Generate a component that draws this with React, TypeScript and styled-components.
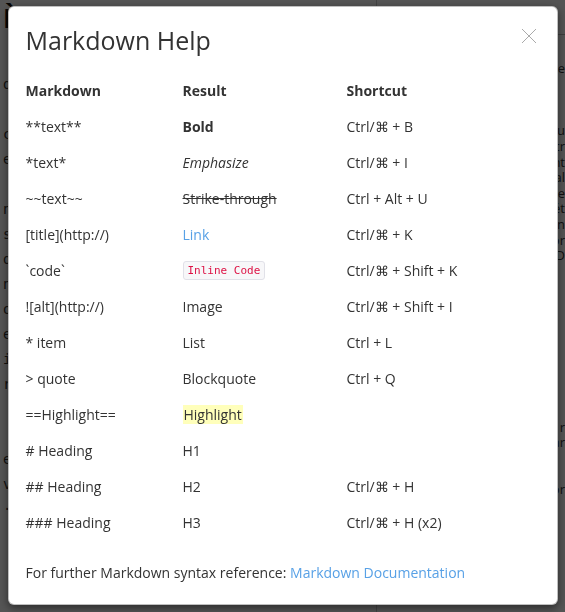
import React from "react";
import styled, { createGlobalStyle } from "styled-components";

const GlobalStyle = createGlobalStyle`
  html, body { margin: 0; padding: 0; overflow: hidden; }
  body { font-family: "Open Sans", "Liberation Sans", sans-serif; background: #fff; }
`;

const Page = styled.div`
  display: grid;
  grid-template-columns: 377px 1fr;
  width: 565px;
  height: 612px;
  overflow: hidden;
  background: #fff;
`;

const SourcePane = styled.div`
  border-right: 1px solid #ccc;
  padding: 0 0 0 3px;
  overflow: hidden;
`;

const PageTitle = styled.h1`
  margin: -2px 0 0;
  font-family: "Open Sans", sans-serif;
  font-size: 26px;
  font-weight: 700;
  color: #111;
  line-height: 40px;
`;

const SourceLines = styled.div`
  margin-top: 34px;
  font-family: "DejaVu Sans Mono", monospace;
  font-size: 14px;
  line-height: 25px;
  color: #333;
  white-space: pre;
`;

const PreviewPane = styled.div`
  padding: 34px 0 0 8px;
  overflow: hidden;
`;

const PreviewRule = styled.div`
  border-top: 1px solid #bbb;
  margin-bottom: 26px;
`;

const PreviewLines = styled.div`
  font-family: "Open Sans", sans-serif;
  font-size: 13px;
  line-height: 15.6px;
  color: #333;
  white-space: pre;
  text-align: right;
`;

const Overlay = styled.div`
  position: fixed;
  inset: 0;
  background: rgba(0, 0, 0, 0.67);
  display: flex;
  justify-content: center;
  align-items: flex-start;
  padding-top: 6px;
`;

const Modal = styled.div`
  position: relative;
  width: 550px;
  box-sizing: border-box;
  background: #fff;
  border: 1px solid rgba(0, 0, 0, 0.25);
  border-radius: 6px;
  box-shadow: 0 3px 9px rgba(0, 0, 0, 0.5);
  padding: 17px 17px 21px;
  color: #333;
`;

const ModalTitle = styled.h2`
  margin: 0;
  font-family: "Open Sans", sans-serif;
  font-size: 25px;
  font-weight: 400;
  line-height: 32px;
  color: #333;
`;

const CloseButton = styled.button`
  position: absolute;
  top: 20px;
  right: 19px;
  width: 18px;
  height: 18px;
  padding: 0;
  border: 0;
  background: none;
  cursor: pointer;
  display: flex;
  align-items: center;
  justify-content: center;
`;

const Table = styled.div`
  display: grid;
  grid-template-columns: 157px 164px 1fr;
  margin-top: 16px;
  font-size: 14px;
`;

const Cell = styled.div<{ $head?: boolean }>`
  height: 36px;
  display: flex;
  align-items: center;
  font-weight: ${(p) => (p.$head ? 700 : 400)};
  color: #333;
  white-space: nowrap;
`;

const Bold = styled.strong`
  font-weight: 700;
`;

const Em = styled.em`
  font-style: italic;
`;

const Strike = styled.span`
  text-decoration: line-through;
`;

const LinkText = styled.a`
  color: #58a1e6;
  text-decoration: none;
`;

const Code = styled.code`
  font-family: "DejaVu Sans Mono", "Liberation Mono", monospace;
  font-size: 11px;
  color: #dd1144;
  background: #f7f7f9;
  border: 1px solid #e1e1e8;
  border-radius: 3px;
  padding: 2px 4px;
  line-height: 13px;
`;

const Mark = styled.mark`
  background: #ffffbb;
  color: #333;
  padding: 0 1px;
`;

const Footer = styled.p`
  margin: 23px 0 0;
  font-size: 14px;
  line-height: 20px;
  color: #333;
`;

const rows: { md: string; result: React.ReactNode; shortcut: string }[] = [
  { md: "**text**", result: <Bold>Bold</Bold>, shortcut: "Ctrl/⌘ + B" },
  { md: "*text*", result: <Em>Emphasize</Em>, shortcut: "Ctrl/⌘ + I" },
  { md: "~~text~~", result: <Strike>Strike-through</Strike>, shortcut: "Ctrl + Alt + U" },
  { md: "[title](http://)", result: <LinkText href="#">Link</LinkText>, shortcut: "Ctrl/⌘ + K" },
  { md: "`code`", result: <Code>Inline Code</Code>, shortcut: "Ctrl/⌘ + Shift + K" },
  { md: "![alt](http://)", result: "Image", shortcut: "Ctrl/⌘ + Shift + I" },
  { md: "* item", result: "List", shortcut: "Ctrl + L" },
  { md: "> quote", result: "Blockquote", shortcut: "Ctrl + Q" },
  { md: "==Highlight==", result: <Mark>Highlight</Mark>, shortcut: "" },
  { md: "# Heading", result: "H1", shortcut: "" },
  { md: "## Heading", result: "H2", shortcut: "Ctrl/⌘ + H" },
  { md: "### Heading", result: "H3", shortcut: "Ctrl/⌘ + H (x2)" },
];

const sourceText = [
  "d", "", "c", "e", "", "n", "s", "d", "n", "o", "e", "i", "r", "", "", "e", "v", "·",
].join("\n");

const previewText = [
  "Le", "", "", "", "au", "cr", "nt", "al", "le", "ét", "in", "or", "D",
  "", "", "", "", "", "", "", "", "", "", "r", "ar", "", "", "or",
].join("\n");

export default function App() {
  return (
    <>
      <GlobalStyle />
      <Page>
        <SourcePane>
          <PageTitle>Ère coloniale</PageTitle>
          <SourceLines>{sourceText}</SourceLines>
        </SourcePane>
        <PreviewPane>
          <PreviewRule />
          <PreviewLines>{previewText}</PreviewLines>
        </PreviewPane>
      </Page>
      <Overlay>
        <Modal>
          <ModalTitle>Markdown Help</ModalTitle>
          <CloseButton aria-label="Close">
            <svg width="16" height="16" viewBox="0 0 16 16">
              <path d="M1 1 L15 15 M15 1 L1 15" stroke="#aaa" strokeWidth="1" fill="none" />
            </svg>
          </CloseButton>
          <Table>
            <Cell $head>Markdown</Cell>
            <Cell $head>Result</Cell>
            <Cell $head>Shortcut</Cell>
            {rows.map((r) => (
              <React.Fragment key={r.md}>
                <Cell>{r.md}</Cell>
                <Cell>{r.result}</Cell>
                <Cell>{r.shortcut}</Cell>
              </React.Fragment>
            ))}
          </Table>
          <Footer>
            For further Markdown syntax reference: <LinkText href="#">Markdown Documentation</LinkText>
          </Footer>
        </Modal>
      </Overlay>
    </>
  );
}
